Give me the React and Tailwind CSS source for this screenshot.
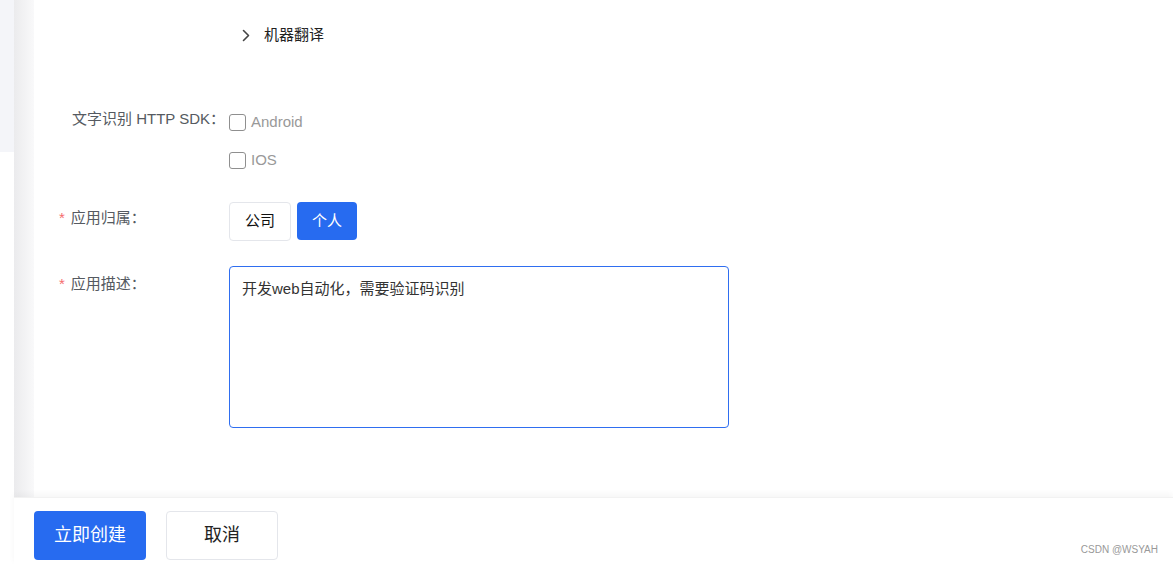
import React from "react";

const font = "[font-family:'Liberation_Sans','Noto_Sans_CJK_SC',sans-serif]";

function Checkbox({ label }) {
  return (
    <div className="flex items-center h-[24px]">
      <span className="w-[17px] h-[17px] border border-[#8f8f8f] rounded-[3px] bg-white"></span>
      <span className="ml-[5px] text-[15px] text-[#999999] leading-[24px]">{label}</span>
    </div>
  );
}

function Label({ children, required, lh }) {
  return (
    <div className={`w-[195px] shrink-0 pl-[38px] text-[15px] text-[#555a61] ${lh}`}>
      {required && <span className="text-[#f56c6c] -ml-[13px] mr-[6px]">*</span>}
      {children}
    </div>
  );
}

export default function App() {
  return (
    <div className={`relative w-full h-[565px] flex overflow-hidden bg-white ${font}`}>
      <div className="w-[14px] shrink-0">
        <div className="h-[152px] bg-[#f4f5f9]"></div>
      </div>
      <div className="flex-1 flex flex-col">
        <div className="h-[497px] flex">
          <div className="w-[20px] shrink-0 bg-linear-to-r from-[#ebebed] to-[#f9f9fa]"></div>
          <div className="flex-1 flex flex-col">
            <div className="h-[70px] flex items-center pl-[208px]">
              <svg width="8" height="13" viewBox="0 0 8 13" fill="none">
                <path d="M1.5 1.5 L6.5 6.5 L1.5 11.5" stroke="#444" strokeWidth="1.6" strokeLinecap="round" strokeLinejoin="round" />
              </svg>
              <span className="ml-[14px] text-[15px] text-[#222]">机器翻译</span>
            </div>
            <div className="mt-[38px] flex">
              <Label lh="leading-[22px]">文字识别 HTTP SDK：</Label>
              <div className="pt-[2px] flex flex-col gap-[14px]">
                <Checkbox label="Android" />
                <Checkbox label="IOS" />
              </div>
            </div>
            <div className="mt-[30px] flex">
              <Label required lh="leading-[32px]">应用归属：</Label>
              <div className="flex gap-[6px]">
                <button className="w-[62px] h-[39px] border border-[#e4e6eb] rounded-[4px] bg-white text-[15px] text-[#111]">公司</button>
                <button className="w-[60px] h-[38px] rounded-[4px] bg-[#276bf0] text-[15px] text-white">个人</button>
              </div>
            </div>
            <div className="mt-[25px] flex">
              <Label required lh="leading-[36px]">应用描述：</Label>
              <textarea
                readOnly
                defaultValue="开发web自动化，需要验证码识别"
                className={`w-[500px] h-[162px] border border-[#2f6ef0] rounded-[4px] px-[12px] py-[11px] text-[15px] leading-[22px] text-[#333] resize-none outline-none ${font}`}
              />
            </div>
          </div>
        </div>
        <div className="flex-1 bg-white shadow-[0_-3px_6px_rgba(0,0,0,0.04)] border-t border-[#f2f2f2] pt-[13px] pl-[20px] flex gap-[20px] relative">
          <button className="w-[112px] h-[49px] rounded-[4px] bg-[#276bf0] text-white text-[18px]">立即创建</button>
          <button className="w-[112px] h-[49px] rounded-[4px] border border-[#e4e6eb] bg-white text-[#222] text-[18px]">取消</button>
          <span className="absolute right-[15px] bottom-[8px] text-[10px] text-[#999] [font-family:'Liberation_Sans',sans-serif]">CSDN @WSYAH</span>
        </div>
      </div>
    </div>
  );
}
